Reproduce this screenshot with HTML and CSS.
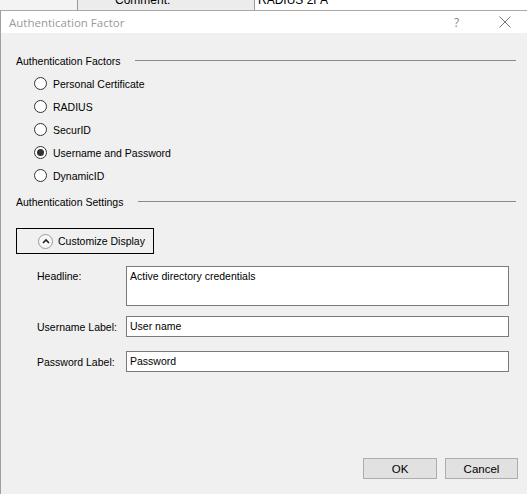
FILE: index.html
```html
<!DOCTYPE html>
<html lang="en">
<head>
  <meta charset="UTF-8" />
  <title>Authentication Factor</title>
  <link rel="stylesheet" href="styles.css">
</head>
<body>
  <div class="behind">
    <div class="behind-cell first"></div>
    <div class="behind-cell second"><span>Comment:</span></div>
    <div class="behind-cell third"><span>RADIUS 2FA</span></div>
  </div>
  <div class="dialog">
    <div class="titlebar">
      <span class="title">Authentication Factor</span>
      <span class="help">?</span>
      <span class="close">
        <svg width="12" height="12" viewBox="0 0 12 12"><path d="M0.5 0.5 L11.5 11.5 M11.5 0.5 L0.5 11.5" stroke="#777" stroke-width="1" fill="none"/></svg>
      </span>
    </div>
    <div class="content">
      <div class="group-head">
        <span>Authentication Factors</span>
        <div class="rule"></div>
      </div>
      <div class="radios">
        <label class="radio"><span class="dot"></span>Personal Certificate</label>
        <label class="radio"><span class="dot"></span>RADIUS</label>
        <label class="radio"><span class="dot"></span>SecurID</label>
        <label class="radio checked"><span class="dot"></span>Username and Password</label>
        <label class="radio"><span class="dot"></span>DynamicID</label>
      </div>
      <div class="group-head settings">
        <span>Authentication Settings</span>
        <div class="rule"></div>
      </div>
      <div class="toggle">
        <span class="toggle-icon">
          <svg width="8" height="6" viewBox="0 0 8 6"><path d="M1 5 L4 2 L7 5" stroke="#222" stroke-width="1.6" fill="none"/></svg>
        </span>
        Customize Display
      </div>
      <div class="fields">
        <div class="field tall">
          <span class="field-label">Headline:</span>
          <div class="box area">Active directory credentials</div>
        </div>
        <div class="field user">
          <span class="field-label">Username Label:</span>
          <div class="box">User name</div>
        </div>
        <div class="field pass">
          <span class="field-label">Password Label:</span>
          <div class="box">Password</div>
        </div>
      </div>
      <div class="footer">
        <button class="btn ok">OK</button>
        <button class="btn cancel">Cancel</button>
      </div>
    </div>
  </div>
</body>
</html>
```

FILE: styles.css
```css
* {
  box-sizing: border-box;
}
body {
  margin: 0;
  padding: 0;
  width: 527px;
  height: 494px;
  overflow: hidden;
  font-family: "Liberation Sans", Arial, sans-serif;
  font-size: 10.5px;
  color: #000;
  background: #f0f0f0;
}
.behind {
  display: flex;
  height: 10px;
  overflow: hidden;
  background: #f3f3f3;
}
.behind-cell {
  height: 10px;
  overflow: hidden;
  font-size: 12px;
  line-height: 12px;
}
.behind-cell span {
  display: block;
  margin-top: -6px;
}
.behind-cell.first {
  width: 78px;
  border-right: 1px solid #9a9a9a;
}
.behind-cell.second {
  width: 177px;
  padding-left: 37px;
  background: #ececec;
  border-right: 1px solid #9a9a9a;
}
.behind-cell.third {
  flex: 1;
  padding-left: 3px;
  background: #fff;
}
.dialog {
  height: 484px;
  border-top: 1px solid #a9a9a9;
  border-left: 1px solid #a0a0a0;
  display: flex;
  flex-direction: column;
}
.titlebar {
  height: 22px;
  background: #fff;
  display: flex;
  align-items: center;
  padding-left: 8px;
  font-family: "Open Sans", sans-serif;
  font-size: 11.5px;
  color: #9a9a9a;
}
.title {
  flex: 1;
}
.help {
  width: 14px;
  margin-right: 31px;
  font-size: 12px;
  color: #888;
}
.close {
  width: 12px;
  margin-right: 16px;
  height: 12px;
  display: flex;
}
.content {
  flex: 1;
  display: flex;
  flex-direction: column;
  padding: 20px 11px 15px 15px;
}
.group-head {
  display: flex;
  align-items: center;
  gap: 15px;
  height: 15px;
}
.group-head .rule {
  flex: 1;
  height: 1px;
  background: #8a8a8a;
  margin-top: -1px;
}
.group-head.settings {
  margin-top: 7px;
}
.radios {
  padding: 4px 0 0 18px;
}
.radio {
  display: flex;
  align-items: center;
  height: 23px;
}
.dot {
  width: 13px;
  height: 13px;
  border: 1px solid #333;
  border-radius: 50%;
  background: #fff;
  margin-right: 6px;
  display: flex;
  align-items: center;
  justify-content: center;
}
.radio.checked .dot::after {
  content: "";
  width: 7px;
  height: 7px;
  border-radius: 50%;
  background: #333;
}
.toggle {
  margin-top: 19px;
  width: 138px;
  height: 26px;
  border: 1px solid #000;
  display: flex;
  align-items: center;
  padding-left: 21px;
  white-space: nowrap;
}
.toggle-icon {
  width: 15px;
  height: 15px;
  border: 1px solid #9a9a9a;
  border-radius: 50%;
  background: #f8f8f8;
  display: flex;
  align-items: center;
  justify-content: center;
  margin-right: 5px;
}
.fields {
  margin-top: 12px;
  padding-right: 7px;
  display: flex;
  flex-direction: column;
}
.field {
  display: flex;
  align-items: center;
  padding-left: 21px;
}
.field.tall {
  align-items: flex-start;
}
.field.tall .field-label {
  padding-top: 4px;
}
.field.user {
  margin-top: 10px;
}
.field.pass {
  margin-top: 14px;
}
.field-label {
  width: 89px;
}
.box {
  flex: 1;
  height: 21px;
  background: #fff;
  border: 1px solid #7a7a7a;
  padding: 2px 3px;
  line-height: 14px;
}
.box.area {
  height: 40px;
}
.footer {
  margin-top: auto;
  display: flex;
  justify-content: flex-end;
  gap: 8px;
}
.btn {
  font-family: "Liberation Sans", Arial, sans-serif;
  font-size: 11.5px;
  height: 21px;
  background: #e1e1e1;
  border: 1px solid #adadad;
  padding: 0;
  color: #000;
}
.btn.ok {
  width: 74px;
}
.btn.cancel {
  width: 73px;
  margin-right: -2px;
}
```
